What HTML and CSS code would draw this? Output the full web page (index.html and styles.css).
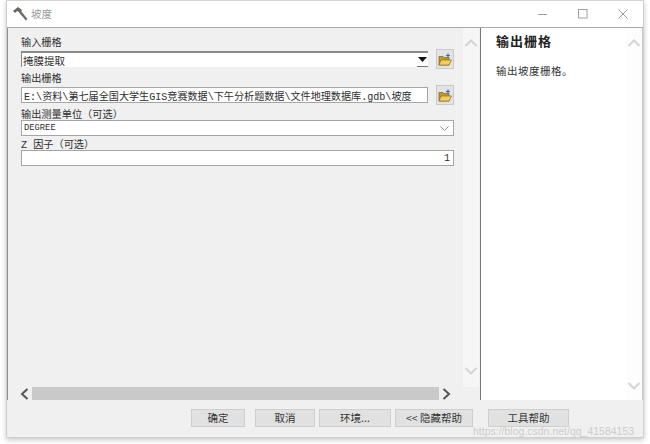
FILE: index.html
```html
<!DOCTYPE html>
<html lang="zh">
<head>
<meta charset="utf-8">
<title>坡度</title>
<link rel="stylesheet" href="styles.css">
</head>
<body>
<div class="window">
  <header class="titlebar">
    <svg class="hammer" width="17" height="16" viewBox="0 0 17 16"><path d="M7 6.500l1.800-1.800 6.700 8.300-1.600 1.500z" fill="#6f6a64"/><path d="M1 5L6 1l4 3-2 2.800L5.200 5 3 7z" fill="#666"/></svg>
    <span class="title">坡度</span>
    <div class="controls">
      <svg width="12" height="12" viewBox="0 0 12 12"><path d="M1 6.500h9" stroke="#a0a0a0" fill="none"/></svg>
      <svg width="12" height="12" viewBox="0 0 12 12"><rect x="1.500" y="1.500" width="8.500" height="8.500" stroke="#a0a0a0" fill="none"/></svg>
      <svg width="12" height="12" viewBox="0 0 12 12"><path d="M1.500 1.500l9 9M10.500 1.500l-9 9" stroke="#a0a0a0" fill="none"/></svg>
    </div>
  </header>
  <main class="content">
    <section class="tool">
      <div class="tool-body">
        <div class="form">
          <label class="label first">输入栅格</label>
          <div class="row">
            <div class="field combo"><span>掩膜提取</span><span class="drop"><svg width="9" height="5" viewBox="0 0 9 5"><path d="M0 0h9L4.500 5z" fill="#111"/></svg></span></div>
            <button class="folder"><svg width="14" height="13" viewBox="0 0 14 13"><path d="M1 12V3.500h4l1 1h5V12z" fill="#c49a2c" stroke="#7a5c18" stroke-width=".7"/><path d="M1 12l2-5h10.500L11 12z" fill="#f3cf63" stroke="#8a6a1c" stroke-width=".7"/><path d="M10 .5v4M8 2.500h4" stroke="#3d6fb0" stroke-width="1.200"/></svg></button>
          </div>
          <label class="label second">输出栅格</label>
          <div class="row">
            <div class="field path"><span>E:\资料\第七届全国大学生GIS竞赛数据\下午分析题数据\文件地理数据库.gdb\坡度</span></div>
            <button class="folder"><svg width="14" height="13" viewBox="0 0 14 13"><path d="M1 12V3.500h4l1 1h5V12z" fill="#c49a2c" stroke="#7a5c18" stroke-width=".7"/><path d="M1 12l2-5h10.500L11 12z" fill="#f3cf63" stroke="#8a6a1c" stroke-width=".7"/><path d="M10 .5v4M8 2.500h4" stroke="#3d6fb0" stroke-width="1.200"/></svg></button>
          </div>
          <label class="label third">输出测量单位（可选）</label>
          <div class="field wide select"><span>DEGREE</span><svg width="9" height="5" viewBox="0 0 9 5"><path d="M.5.500l4 4 4-4" stroke="#8a8a8a" fill="none"/></svg></div>
          <label class="label fourth"><span class="z">Z</span>因子（可选）</label>
          <div class="field wide number"><span>1</span></div>
        </div>
        <div class="vscroll">
          <svg width="14" height="8" viewBox="0 0 14 8"><path d="M1.500 7L7 1.500 12.500 7" stroke="#d4d4d4" stroke-width="2" fill="none"/></svg>
          <svg width="14" height="8" viewBox="0 0 14 8"><path d="M1.500 1L7 6.500 12.500 1" stroke="#d4d4d4" stroke-width="2" fill="none"/></svg>
        </div>
      </div>
      <div class="hscroll">
        <svg width="9" height="12" viewBox="0 0 9 12"><path d="M7.500 1L2 6l5.500 5" stroke="#555" stroke-width="2" fill="none"/></svg>
        <div class="thumb"></div>
        <svg width="9" height="12" viewBox="0 0 9 12"><path d="M1.500 1L7 6l-5.500 5" stroke="#555" stroke-width="2" fill="none"/></svg>
      </div>
    </section>
    <aside class="help">
      <div class="help-text">
        <h2>输出栅格</h2>
        <p>输出坡度栅格。</p>
      </div>
      <div class="vscroll help-scroll">
        <svg width="14" height="8" viewBox="0 0 14 8"><path d="M1.500 7L7 1.500 12.500 7" stroke="#d4d4d4" stroke-width="2" fill="none"/></svg>
        <svg width="14" height="8" viewBox="0 0 14 8"><path d="M1.500 1L7 6.500 12.500 1" stroke="#d4d4d4" stroke-width="2" fill="none"/></svg>
      </div>
    </aside>
  </main>
  <footer class="buttons">
    <button class="btn ok">确定</button>
    <button class="btn cancel">取消</button>
    <button class="btn env">环境...</button>
    <button class="btn hide">&lt;&lt; 隐藏帮助</button>
    <button class="btn toolhelp">工具帮助</button>
  </footer>
</div>
<div class="watermark">https://blog.csdn.net/qq_41584153</div>
</body>
</html>
```
FILE: styles.css
```css
* { box-sizing: border-box; }
html, body { margin: 0; height: 100%; }
body {
  width: 650px;
  height: 444px;
  background: #fff;
  overflow: hidden;
  position: relative;
  font-family: "Noto Sans CJK SC", "Noto Sans", sans-serif;
  font-size: 11px;
  color: #333;
}
.window {
  width: 638px;
  height: 438px;
  margin-left: 6px;
  display: flex;
  flex-direction: column;
  background: #f0f0f0;
  border: 1px solid #cfcfcf;
  border-top-color: #d4d4d4;
  box-shadow: 0 2px 5px rgba(0,0,0,.22);
}
.titlebar {
  height: 26px;
  flex: none;
  background: #fff;
  display: flex;
  align-items: center;
  padding-left: 5px;
}
.hammer { margin-right: 2px; }
.title { color: #9a9a9a; font-size: 10.500px; line-height: 12px; margin-bottom: 1px; }
.controls {
  margin-left: auto;
  margin-right: 14px;
  display: flex;
  gap: 28px;
  align-items: center;
}
.content {
  flex: none;
  height: 373px;
  display: flex;
  gap: 1px;
  background: #f0f0f0;
  border-top: 1px solid #a8a8a8;
}
.tool {
  width: 472px;
  display: flex;
  flex-direction: column;
  border-left: 1px solid #8f8f8f;
}
.tool-body { flex: 1; display: flex; min-height: 0; }
.form { flex: 1; padding: 7px 0 0 13px; min-width: 0; }
.label { display: block; height: 14px; font-size: 10.200px; line-height: 14px; color: #2e2e2e; }
.first { margin-bottom: 0; }
.second { margin-top: 2px; }
.third { margin-top: 2px; margin-bottom: -1px; }
.fourth { margin-top: 1px; margin-bottom: -1px; }
.z { font-family: "Liberation Mono", monospace; margin-right: 6px; }
.row { display: flex; align-items: center; gap: 8px; height: 20px; }
.field {
  background: #fff;
  height: 16px;
  display: flex;
  align-items: center;
  padding-left: 2px;
  border: 1px solid #a5a5a5;
  font-family: "Liberation Mono", "Noto Sans CJK SC", monospace;
  font-size: 10.100px;
  color: #2e2e2e;
  white-space: nowrap;
}
.combo, .path { width: 407px; }
.combo { border: 0; border-top: 2px solid #8a8a8a; border-left: 1px solid #8a8a8a; justify-content: space-between; padding: 0 0 0 1px; font-size: 10.500px; }
.drop {
  width: 11px;
  height: 14px;
  display: flex;
  align-items: center;
  justify-content: center;
  border-bottom: 1px solid #777;
}
.folder {
  width: 18px;
  height: 20px;
  padding: 0;
  background: #e3e3e3;
  border: 1px solid #cacaca;
  display: flex;
  align-items: center;
  justify-content: center;
}
.wide { width: 433px; }
.select { justify-content: space-between; padding-right: 4px; font-size: 8.800px; }
.number { justify-content: flex-end; padding-right: 3px; }
.vscroll {
  width: 16px;
  flex: none;
  background: #f6f6f6;
  display: flex;
  flex-direction: column;
  justify-content: space-between;
  align-items: center;
  padding: 11px 0 12px;
  margin-left: 7px;
}
.hscroll {
  height: 13px;
  flex: none;
  display: flex;
  align-items: center;
  padding-left: 12px;
  gap: 3px;
}
.thumb { width: 407px; height: 13px; background: #c9c9c9; }
.help {
  flex: 1;
  background: #fff;
  display: flex;
  border-left: 1px solid #777;
  border-right: 1px solid #c8c8c8;
}
.help-text { flex: 1; padding: 4px 0 0 15px; color: #222; }
.help-text h2 { margin: 0; font-size: 13px; line-height: 18px; font-weight: 700; letter-spacing: 1px; }
.help-text p { margin: 13px 0 0; font-size: 10.500px; line-height: 16px; letter-spacing: .5px; color: #333; }
.help-scroll { background: #fdfdfd; margin: 0; padding: 11px 0 10px; }
.buttons {
  flex: 1;
  display: flex;
  align-items: flex-start;
  padding: 9px 0 0 184px;
  gap: 4px;
}
.btn {
  height: 18px;
  padding: 0;
  background: #e1e1e1;
  border: 1px solid #cfcfcf;
  font-family: "Noto Sans CJK SC", sans-serif;
  font-size: 10.500px;
  line-height: 14px;
  color: #333;
}
.ok { width: 54px; margin-right: 6px; }
.cancel { width: 60px; }
.env { width: 72px; }
.hide { width: 78px; margin-right: 11px; }
.toolhelp { width: 81px; }
.watermark {
  position: absolute;
  left: 473px;
  top: 425px;
  font-family: "Liberation Sans", sans-serif;
  font-size: 10.500px;
  color: rgba(170,170,170,.55);
  white-space: nowrap;
}
```
